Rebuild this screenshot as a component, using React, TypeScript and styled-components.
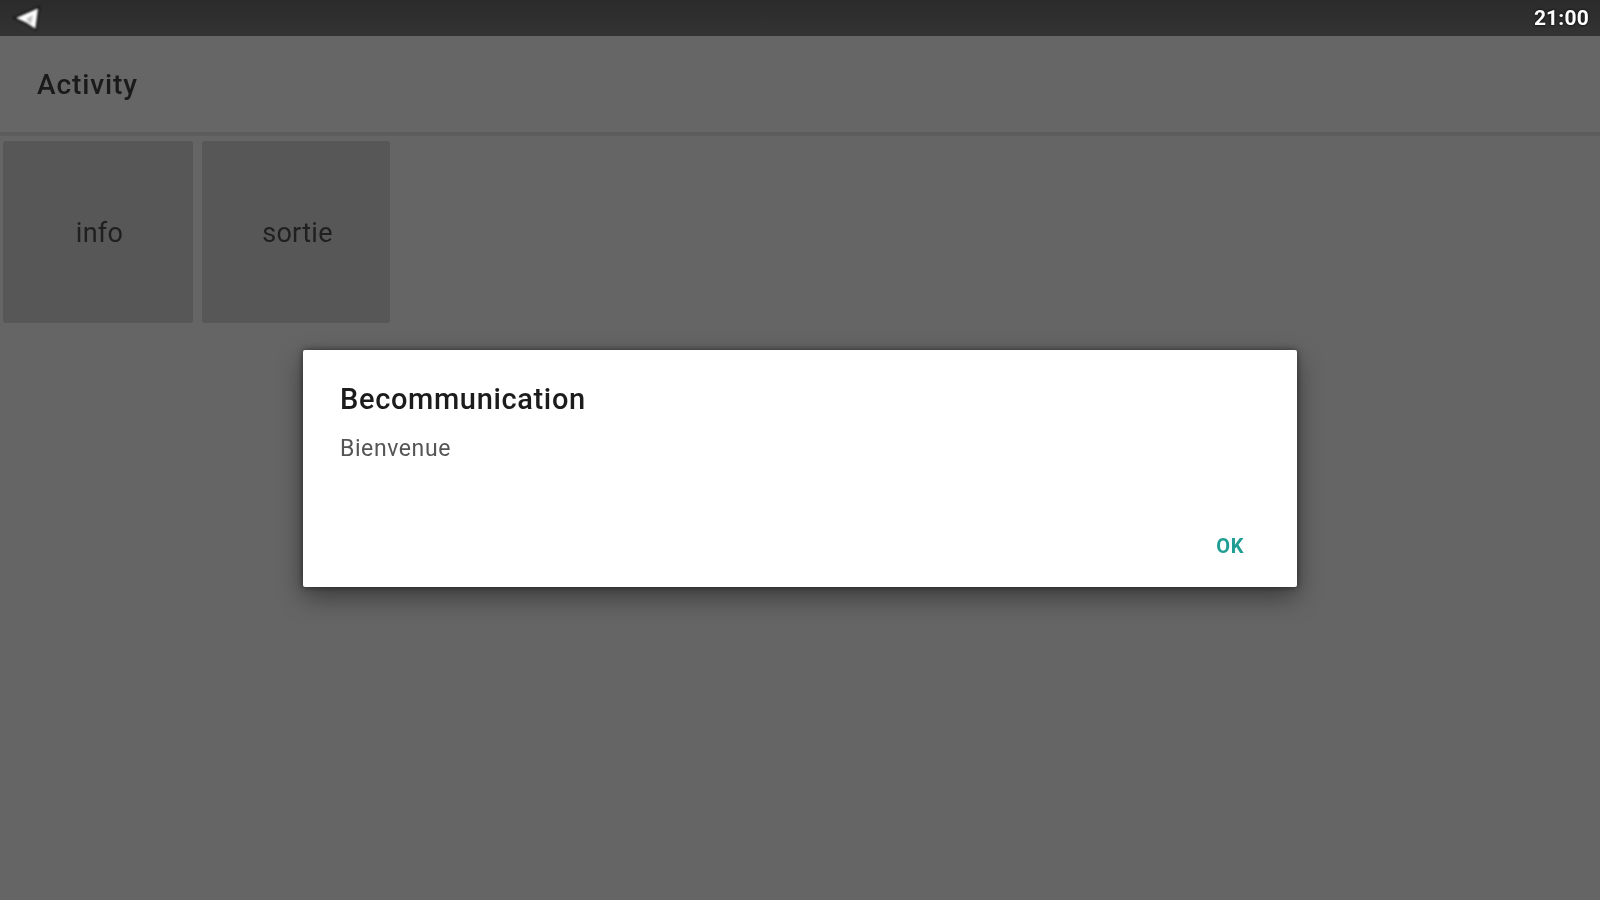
import React from "react";
import styled, { createGlobalStyle } from "styled-components";

const GlobalStyle = createGlobalStyle`
  html, body {
    margin: 0;
    padding: 0;
    height: 100%;
    background: #656565;
    overflow: hidden;
  }
  body {
    font-family: Roboto, "Liberation Sans", sans-serif;
  }
`;

const App = () => {
  return (
    <Screen>
      <GlobalStyle />
      <StatusBar>
        <LogoIcon width="30" height="26" viewBox="0 0 30 26">
          <path d="M2 13 L27 2 L24 25 L15 19 Z" fill="#fff" stroke="#0c0c0c" strokeWidth="1.5" strokeLinejoin="round" />
          <path d="M14 14 L21 10 L19 19 Z" fill="#bdbdbd" />
        </LogoIcon>
        <Clock>21:00</Clock>
      </StatusBar>
      <Toolbar>
        <ToolbarTitle>Activity</ToolbarTitle>
      </Toolbar>
      <CardRow>
        <Card $width={190}>info</Card>
        <Card $width={188}>sortie</Card>
      </CardRow>
      <Dialog>
        <DialogTitle>Becommunication</DialogTitle>
        <DialogMessage>Bienvenue</DialogMessage>
        <DialogActions>
          <OkButton>OK</OkButton>
        </DialogActions>
      </Dialog>
    </Screen>
  );
};

export default App;

const Screen = styled.div`
  position: relative;
  width: 1600px;
  height: 900px;
  background: #656565;
  overflow: hidden;
`;

const StatusBar = styled.div`
  height: 36px;
  background: linear-gradient(#2b2b2b, #333333);
  display: flex;
  align-items: center;
  justify-content: space-between;
  padding: 0 11px 0 12px;
  box-sizing: border-box;
`;

const LogoIcon = styled.svg`
  filter: blur(0.8px);
`;

const Clock = styled.span`
  color: #fff;
  font-size: 21px;
  font-weight: 700;
  letter-spacing: 0.2px;
  text-shadow: 0 0 3px #000;
  filter: blur(0.7px);
`;

const Toolbar = styled.div`
  height: 96px;
  background: #666666;
  border-bottom: 4px solid #5c5c5c;
  display: flex;
  align-items: center;
  padding-left: 37px;
  box-sizing: content-box;
`;

const ToolbarTitle = styled.h1`
  margin: 0;
  font-size: 28px;
  font-weight: 500;
  letter-spacing: 0.9px;
  color: #1a1a1a;
  filter: blur(0.7px);
`;

const CardRow = styled.div`
  display: flex;
  gap: 9px;
  padding: 5px 0 0 3px;
`;

const Card = styled.div<{ $width: number }>`
  width: ${(props) => props.$width}px;
  height: 182px;
  background: #575757;
  border-radius: 3px;
  display: flex;
  align-items: center;
  justify-content: center;
  padding: 2px 0 0 3px;
  box-sizing: border-box;
  font-size: 27px;
  letter-spacing: 0.3px;
  color: #1f1f1f;
  filter: blur(0.7px);
`;

const Dialog = styled.div`
  position: absolute;
  left: 303px;
  top: 350px;
  width: 994px;
  height: 237px;
  box-sizing: border-box;
  padding: 32px 37px 0;
  background: #fff;
  border-radius: 2px;
  box-shadow: 0 10px 26px rgba(0, 0, 0, 0.42), 0 0 6px rgba(0, 0, 0, 0.5);
  display: flex;
  flex-direction: column;
`;

const DialogTitle = styled.div`
  font-size: 29px;
  font-weight: 500;
  line-height: 34px;
  letter-spacing: 0.65px;
  color: #1c1c1c;
  filter: blur(0.6px);
`;

const DialogMessage = styled.div`
  margin-top: 19px;
  font-size: 23px;
  line-height: 28px;
  letter-spacing: 0.6px;
  color: #555;
  filter: blur(0.7px);
`;

const DialogActions = styled.div`
  margin-top: auto;
  display: flex;
  justify-content: flex-end;
  padding: 0 16px 29px 0;
`;

const OkButton = styled.span`
  font-size: 20px;
  font-weight: 700;
  letter-spacing: 0.6px;
  color: #1f9e94;
  filter: blur(0.6px);
`;
